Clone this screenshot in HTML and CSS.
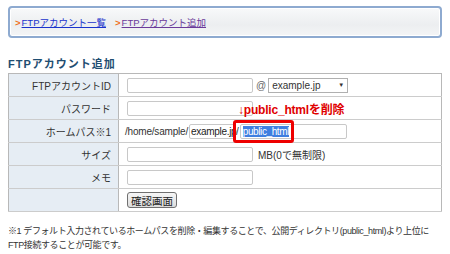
FILE: index.html
```html
<!DOCTYPE html>
<html lang="ja">
<head>
    <meta charset="UTF-8">
    <title>FTPアカウント追加</title>
    <link rel="stylesheet" href="styles.css">
</head>
<body>
    <!-- Sub navigation -->
    <div class="subnav">
        <a class="subnav-link" href="#">FTPアカウント一覧</a>
        <a class="subnav-link visited" href="#">FTPアカウント追加</a>
    </div>

    <h2 class="section-title">FTPアカウント追加</h2>

    <table class="form-table">
        <tr>
            <th>FTPアカウントID</th>
            <td>
                <div class="cell">
                    <input type="text" class="field">
                    <span class="at">@</span>
                    <span class="select">example.jp<span class="arrow">▼</span></span>
                </div>
            </td>
        </tr>
        <tr>
            <th>パスワード</th>
            <td>
                <div class="cell">
                    <input type="text" class="field">
                    <span class="note-red">↓public_htmlを削除</span>
                </div>
            </td>
        </tr>
        <tr>
            <th>ホームパス※1</th>
            <td>
                <div class="cell">
                    <span class="path">/home/sample/</span>
                    <span class="field small">example.jp</span>
                    <span class="slash">/</span>
                    <span class="field path-field"><span class="selected">public_html</span></span>
                    <span class="mark-box"></span>
                </div>
            </td>
        </tr>
        <tr>
            <th>サイズ</th>
            <td>
                <div class="cell">
                    <input type="text" class="field">
                    <span class="unit">MB(0で無制限)</span>
                </div>
            </td>
        </tr>
        <tr>
            <th>メモ</th>
            <td><div class="cell"><input type="text" class="field"></div></td>
        </tr>
        <tr>
            <th></th>
            <td><div class="cell"><button class="btn">確認画面</button></div></td>
        </tr>
    </table>

    <p class="footnote">※1 デフォルト入力されているホームパスを削除・編集することで、公開ディレクトリ(public_html)より上位に<br>FTP接続することが可能です。</p>
</body>
</html>
```

FILE: styles.css
```css
/* Page base */
body {
    margin: 0;
    padding: 6px 8px;
    font-family: "Liberation Sans", "Noto Sans CJK JP", sans-serif;
    font-size: 10px;
    color: #333333;
    background: #ffffff;
}

/* Sub navigation box */
.subnav {
    height: 28px;
    border: 2px solid #8eaad0;
    border-radius: 4px;
    background: linear-gradient(#f8f9fa, #eceef0 60%, #f4f5f6);
    box-shadow: inset 0 0 0 1px #ffffff;
    display: flex;
    align-items: center;
    padding-left: 5px;
    gap: 9px;
}

.subnav-link {
    color: #1a33cc;
    font-size: 9.5px;
    text-decoration: underline;
}

.subnav-link::before {
    content: ">";
    color: #f07020;
    font-weight: bold;
    display: inline-block;
    margin-right: 1px;
    text-decoration: none;
}

.subnav-link.visited {
    color: #6a3a9a;
}

/* Section title */
.section-title {
    margin: 17px 0 2px;
    font-size: 11px;
    font-weight: bold;
    letter-spacing: 1px;
    color: #1f4e72;
}

/* Form table */
.form-table {
    width: 434px;
    border-collapse: collapse;
    border: 1px solid #b8b8b8;
}

.form-table th,
.form-table td {
    height: 22px;
    padding: 0;
    border-bottom: 1px solid #cccccc;
    font-weight: normal;
}

.form-table th {
    width: 102px;
    padding-right: 7px;
    text-align: right;
    background: #e6edf4;
    border-right: 1px solid #b8b8b8;
}

.form-table td {
    padding-left: 8px;
}

.cell {
    display: flex;
    align-items: center;
    position: relative;
    height: 22px;
}

.field {
    box-sizing: border-box;
    display: inline-block;
    width: 126px;
    height: 15px;
    margin: 0;
    padding: 0 2px;
    border: 1px solid #c8c8c8;
    border-radius: 2px;
    background: #ffffff;
    font: inherit;
    line-height: 13px;
}

.at {
    margin: 0 2px 0 3px;
    color: #666666;
}

.select {
    box-sizing: border-box;
    display: inline-flex;
    justify-content: space-between;
    align-items: center;
    width: 80px;
    height: 15px;
    padding: 0 3px;
    border: 1px solid #b0b0b0;
    background: #ffffff;
}

.arrow {
    font-size: 6px;
}

.note-red {
    margin-left: -15px;
    color: #e00000;
    font-weight: bold;
    font-size: 12px;
    letter-spacing: -0.2px;
    position: relative;
    z-index: 1;
}

.path {
    margin-left: -2px;
    letter-spacing: -0.2px;
}

.field.small {
    width: 46px;
    margin-left: 1px;
    padding: 0 1px;
    color: #222222;
    letter-spacing: -0.3px;
}

.slash {
    margin: 0 1px;
}

.field.path-field {
    width: 107px;
    padding: 0 2px;
}

.selected {
    background: #3f7fe0;
    color: #ffffff;
    letter-spacing: -0.4px;
}

/* Red highlight box over the path field */
.mark-box {
    position: absolute;
    left: 106px;
    top: 0;
    width: 55px;
    height: 17px;
    border: 3px solid #ee0000;
    border-radius: 3px;
}

.unit {
    margin-left: 5px;
}

.btn {
    height: 16px;
    padding: 0 3px;
    font: inherit;
    font-size: 10.5px;
    border: 1px solid #707070;
    border-radius: 3px;
    background: linear-gradient(#f6f6f6, #dcdcdc);
    color: #222222;
}

/* Footnote */
.footnote {
    margin: 12px 0 0;
    font-size: 9px;
    letter-spacing: -0.4px;
    line-height: 14px;
    white-space: nowrap;
}
```
